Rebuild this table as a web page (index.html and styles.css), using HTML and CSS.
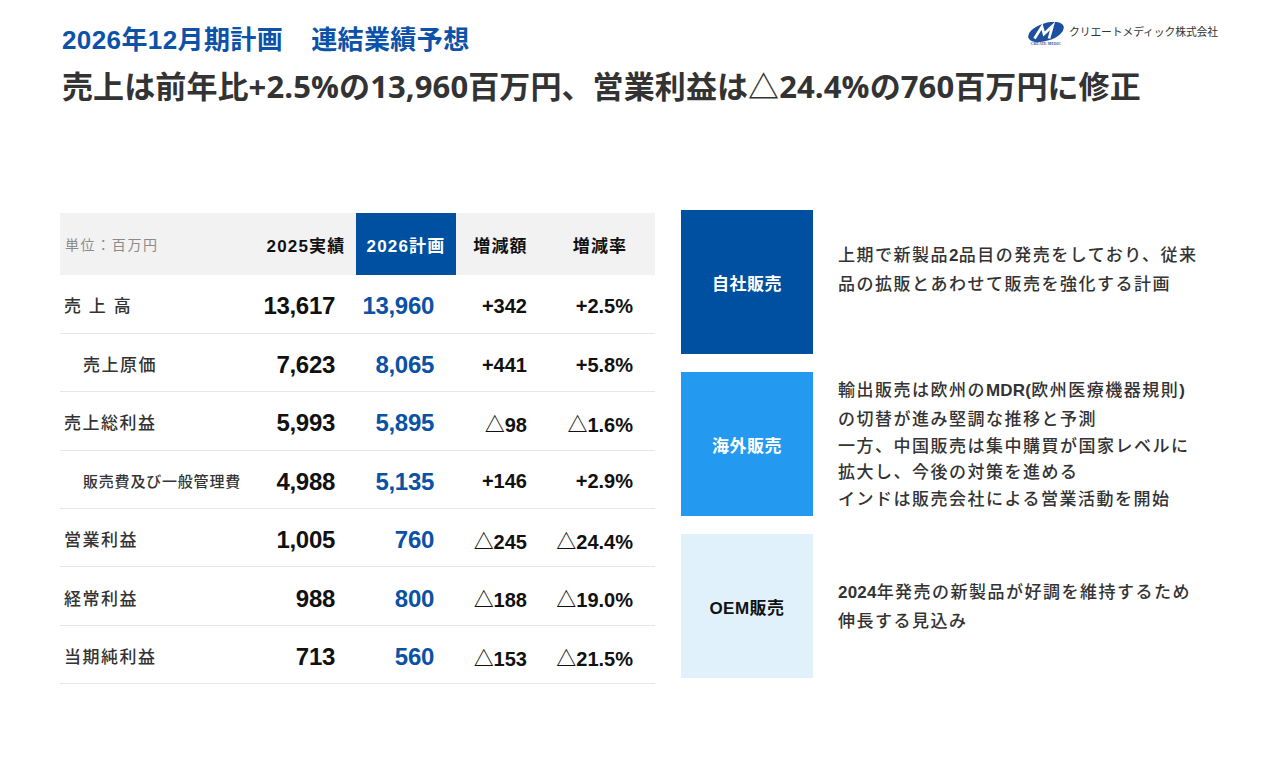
FILE: index.html
```html
<!DOCTYPE html>
<html lang="ja">
<head>
<meta charset="utf-8">
<title>2026年12月期計画 連結業績予想</title>
<link rel="stylesheet" href="styles.css">
</head>
<body>
<div class="page">
  <header class="top">
    <div class="titles">
      <h1 class="kicker">2026年12月期計画<span class="sp"></span>連結業績予想</h1>
      <h2 class="headline">売上は前年比+2.5%の13,960百万円、営業利益は△24.4%の760百万円に修正</h2>
    </div>
    <div class="logo">
      <svg class="logo-mark" width="40" height="24" viewBox="0 0 40 24" aria-hidden="true">
        <ellipse cx="20" cy="10" rx="18.5" ry="8.8" transform="rotate(-18 20 10)" fill="#1d4f9f"/>
        <path d="M8.5 16.5 L16 4.5 L18 12 L26.5 4 L23 16.5" fill="none" stroke="#fff" stroke-width="2.7" stroke-linejoin="miter"/>
        <text x="20" y="23.4" text-anchor="middle" class="logo-small">CREATE MEDIC</text>
      </svg>
      <span class="logo-name">クリエートメディック株式会社</span>
    </div>
  </header>

  <main class="content">
    <table class="fin">
      <thead>
        <tr>
          <th class="c-label unit">単位：百万円</th>
          <th class="c-num">2025実績</th>
          <th class="c-num plan">2026計画</th>
          <th class="c-diff">増減額</th>
          <th class="c-rate">増減率</th>
        </tr>
      </thead>
      <tbody>
        <tr>
          <td class="c-label wide">売 上 高</td>
          <td class="v">13,617</td>
          <td class="v blue">13,960</td>
          <td class="d">+342</td>
          <td class="r">+2.5%</td>
        </tr>
        <tr>
          <td class="c-label sub">売上原価</td>
          <td class="v">7,623</td>
          <td class="v blue">8,065</td>
          <td class="d">+441</td>
          <td class="r">+5.8%</td>
        </tr>
        <tr>
          <td class="c-label">売上総利益</td>
          <td class="v">5,993</td>
          <td class="v blue">5,895</td>
          <td class="d">△98</td>
          <td class="r">△1.6%</td>
        </tr>
        <tr>
          <td class="c-label sub small">販売費及び一般管理費</td>
          <td class="v">4,988</td>
          <td class="v blue">5,135</td>
          <td class="d">+146</td>
          <td class="r">+2.9%</td>
        </tr>
        <tr>
          <td class="c-label">営業利益</td>
          <td class="v">1,005</td>
          <td class="v blue">760</td>
          <td class="d">△245</td>
          <td class="r">△24.4%</td>
        </tr>
        <tr>
          <td class="c-label">経常利益</td>
          <td class="v">988</td>
          <td class="v blue">800</td>
          <td class="d">△188</td>
          <td class="r">△19.0%</td>
        </tr>
        <tr>
          <td class="c-label">当期純利益</td>
          <td class="v">713</td>
          <td class="v blue">560</td>
          <td class="d">△153</td>
          <td class="r">△21.5%</td>
        </tr>
      </tbody>
    </table>

    <div class="segments">
      <div class="seg seg-top">
        <div class="seg-box dark">自社販売</div>
        <p class="seg-text">上期で新製品<span class="lat">2</span>品目の発売をしており、従来<br>品の拡販とあわせて販売を強化する計画</p>
      </div>
      <div class="seg">
        <div class="seg-box light">海外販売</div>
        <p class="seg-text">輸出販売は欧州の<span class="lat">MDR(</span>欧州医療機器規則<span class="lat">)</span><br>の切替が進み堅調な推移と予測<br>一方、中国販売は集中購買が国家レベルに<br>拡大し、今後の対策を進める<br>インドは販売会社による営業活動を開始</p>
      </div>
      <div class="seg">
        <div class="seg-box pale">OEM販売</div>
        <p class="seg-text"><span class="lat">2024</span>年発売の新製品が好調を維持するため<br>伸長する見込み</p>
      </div>
    </div>
  </main>
</div>
</body>
</html>
```

FILE: styles.css
```css
* { box-sizing: border-box; }
html, body { margin: 0; padding: 0; background: #fff; }
body {
  width: 1280px;
  height: 759px;
  overflow: hidden;
  font-family: "Liberation Sans", "Noto Sans CJK JP", sans-serif;
  color: #222;
}

.page { padding: 0 62px 0 60px; }

/* header */
.top {
  display: flex;
  justify-content: space-between;
  align-items: flex-start;
  padding-top: 25px;
  padding-left: 2px;
}
.titles { flex: 1 1 auto; min-width: 0; }
.kicker {
  margin: 0;
  font-size: 26px;
  line-height: 30px;
  font-weight: 700;
  color: #0b52a8;
  letter-spacing: 0.4px;
  white-space: nowrap;
}
.kicker .sp { display: inline-block; width: 28px; }
.headline {
  margin: 12px 0 0 0;
  font-family: "Open Sans", "Noto Sans CJK JP", sans-serif;
  font-size: 31px;
  line-height: 38px;
  font-weight: 700;
  color: #333;
  letter-spacing: 0.1px;
  white-space: nowrap;
}
.logo {
  flex: 0 0 auto;
  display: flex;
  align-items: center;
  gap: 3px;
  margin-top: -3px;
}
.logo-mark { display: block; }
.logo-small {
  font-family: "Liberation Serif", serif;
  font-size: 3.8px;
  font-weight: 700;
  fill: #1d4f9f;
  letter-spacing: 0.1px;
}
.logo-name {
  font-family: "Noto Sans CJK JP", sans-serif;
  font-size: 10.8px;
  color: #333;
  letter-spacing: -0.1px;
  margin-top: -6px;
  white-space: nowrap;
}

/* main */
.content {
  display: flex;
  align-items: flex-start;
  gap: 26px;
  margin-top: 105px;
}

.fin {
  width: 595px;
  border-collapse: collapse;
  margin-top: 3px;
  table-layout: fixed;
}
.fin th {
  height: 62px;
  background: #f2f2f2;
  font-size: 17px;
  font-weight: 700;
  letter-spacing: 1.2px;
  color: #111;
  text-align: center;
  padding: 0;
}
.fin th.c-label { width: 196px; }
.fin th.c-num { width: 100px; }
.fin th.c-diff { width: 89px; }
.fin th.c-rate { width: 110px; }
.fin th.unit {
  text-align: left;
  padding-left: 5px;
  font-size: 14px;
  font-weight: 400;
  color: #8a8a8a;
  letter-spacing: 1.6px;
}
.fin th.plan { background: #0050a2; color: #fff; }

.fin td {
  height: 58.4px;
  border-bottom: 1px solid #e6e6e6;
  padding: 0;
  font-size: 24px;
  font-weight: 700;
  color: #111;
  text-align: right;
}
.fin td.c-label {
  text-align: left;
  padding: 2px 0 0 4px;
  font-family: "Noto Sans CJK JP", sans-serif;
  font-size: 17px;
  font-weight: 500;
  letter-spacing: 1.5px;
  color: #333;
}
.fin td.c-label.wide { letter-spacing: 1.5px; word-spacing: 1px; }
.fin td.c-label.sub { padding-left: 23px; }
.fin td.c-label.small { font-size: 15px; letter-spacing: 0.8px; }
.fin td.v { padding: 5px 21px 0 0; letter-spacing: -0.3px; }
.fin td.v.blue { color: #0a52a6; padding-right: 22px; }
.fin td.d { font-size: 20px; padding: 5px 18px 0 0; }
.fin td.r { font-size: 20px; padding: 5px 22px 0 0; }

/* segments */
.segments {
  display: flex;
  flex-direction: column;
  gap: 18px;
  width: 400px;
}
.seg {
  display: flex;
  align-items: center;
  gap: 25px;
  height: 144px;
}
.seg-box {
  flex: 0 0 132px;
  height: 144px;
  display: flex;
  align-items: center;
  justify-content: center;
  font-size: 17px;
  font-weight: 700;
  letter-spacing: 0.5px;
}
.seg-box.dark { background: #0050a2; color: #fff; }
.seg-box.light { background: #239af0; color: #fff; }
.seg-box.pale { background: #e1f1fc; color: #111; }
.seg-text {
  margin: 0;
  font-family: "Noto Sans CJK JP", sans-serif;
  font-size: 17px;
  font-weight: 500;
  line-height: 26.8px;
  letter-spacing: 1.5px;
  color: #333;
  white-space: nowrap;
}
.seg-top .seg-text { padding-bottom: 27px; }
.seg-text .lat { font-family: "Liberation Sans", sans-serif; font-weight: 700; letter-spacing: 0.2px; }
```
